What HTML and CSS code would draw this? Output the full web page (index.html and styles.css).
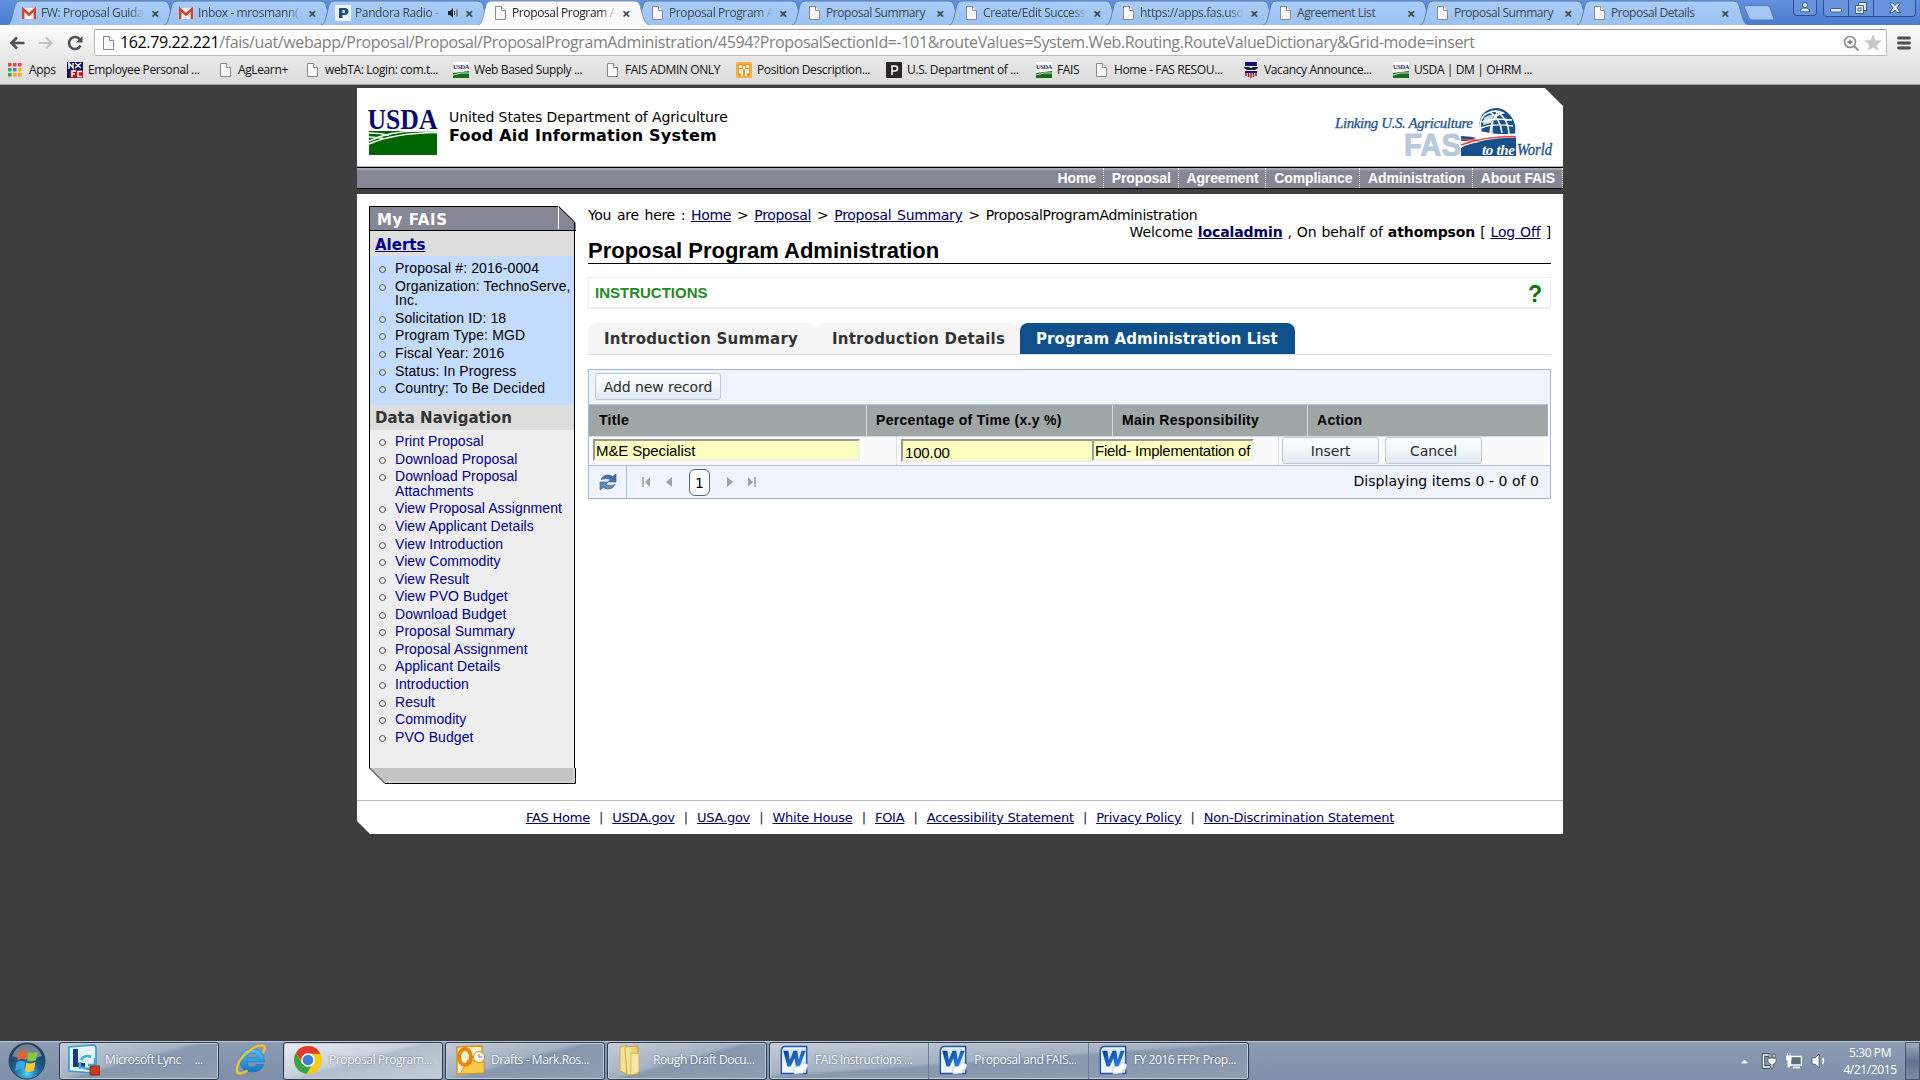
FILE: index.html
```html
<!DOCTYPE html>
<html lang="en">
<head>
  <meta charset="UTF-8" />
  <title>Proposal Program Administration</title>
  <link rel="stylesheet" href="styles.css">
</head>
<body>
  <!-- shared icons -->
  <svg class="defs" width="0" height="0">
    <defs>
      <linearGradient id="gBlue" x1="0" y1="0" x2="0" y2="1"><stop offset="0" stop-color="#4fc3f7"/><stop offset="1" stop-color="#1473c8"/></linearGradient>
      <linearGradient id="gTab" x1="0" y1="0" x2="0" y2="1"><stop offset="0" stop-color="#a9cdf9"/><stop offset="1" stop-color="#9cc2f3"/></linearGradient>
      <radialGradient id="gOrb" cx=".5" cy=".85" r=".8"><stop offset="0" stop-color="#4fd3f5"/><stop offset=".45" stop-color="#1b5f95"/><stop offset="1" stop-color="#24384f"/></radialGradient>
      <linearGradient id="gFolder" x1="0" y1="0" x2="1" y2="0"><stop offset="0" stop-color="#fbeeb0"/><stop offset="1" stop-color="#e2c056"/></linearGradient>
      <linearGradient id="gWord" x1="0" y1="0" x2="1" y2="1"><stop offset="0" stop-color="#0c3c9c"/><stop offset="1" stop-color="#2f8be6"/></linearGradient>
    </defs>
    <symbol id="tab" viewBox="0 0 172 25"><path d="M0 25C4 24 4 21 8 5Q9 1 13 1H157Q161 1 162 5C166 21 167 24 172 25"/></symbol>
    <symbol id="page" viewBox="0 0 16 16"><path d="M3.500 1.500h6l4 4v9h-10z" fill="#f8f8f8" stroke="#8a8a8a"/><path d="M9.500 1.500v4h4" fill="#fff" stroke="#8a8a8a"/></symbol>
    <symbol id="gmail" viewBox="0 0 16 16"><rect x="1" y="3" width="14" height="11" rx="1" fill="#f4f0ef"/><path d="M2.200 14V4.200L8 9.500l5.800-5.300V14" fill="none" stroke="#d8402f" stroke-width="2.400"/></symbol>
    <symbol id="usda" viewBox="0 0 16 16"><rect width="16" height="16" fill="#fff"/><text x="0" y="7" font-family="Liberation Serif" font-weight="bold" font-size="7" textLength="16" lengthAdjust="spacingAndGlyphs" fill="#1c1c5c">USDA</text><path d="M0 11Q8 10 16 9v7H0z" fill="#176b1c"/><path d="M0 13Q8 10 16 11" stroke="#cfe6cf" fill="none"/></symbol>
    <symbol id="word" viewBox="0 0 30 32"><path d="M5 1.500h23.500v29H1.500V6Q2 2 5 1.500z" fill="#eef5fd" stroke="#2554a8" stroke-width="1.600"/><path d="M4 4h22v12H4z" fill="#d3e6fb"/><path d="M3.500 6h5.500l1.500 10 4-10h4l1.500 10 3-10h4.500l-6.500 17h-4l-1.500-9-4 9H8z" fill="url(#gWord)"/><path d="M15 24l7-2 2-4 6 3-2 6-2-1-1 4-10 1z" fill="#fff" stroke="#9db9de" stroke-width=".7"/></symbol>
  </svg>

  <header class="chrome">
    <div class="tabstrip">
      <div class="tab"><svg class="shape"><use href="#tab"/></svg><svg class="ico"><use href="#gmail"/></svg><span>FW: Proposal Guida</span><i>×</i></div>
      <div class="tab"><svg class="shape"><use href="#tab"/></svg><svg class="ico"><use href="#gmail"/></svg><span>Inbox - mrosmann(</span><i>×</i></div>
      <div class="tab audio"><svg class="shape"><use href="#tab"/></svg><svg class="ico" viewBox="0 0 16 16"><rect width="16" height="16" rx="1" fill="#eef3f7"/><path d="M4 3h5.500q4 0 4 3.500t-4.500 3.500H7.500v3H4zM7.500 5v3h1q1.500 0 1.500-1.500T8.500 5z" fill="#1d4e7c"/></svg><span>Pandora Radio -</span><svg class="speaker" viewBox="0 0 10 10"><path d="M0 3h2l3-3v10L2 7H0z" fill="#222"/><path d="M6.500 3v4M9 1.500v7" stroke="#444"/></svg><i>×</i></div>
      <div class="tab active"><svg class="shape"><use href="#tab"/></svg><svg class="ico"><use href="#page"/></svg><span>Proposal Program A</span><i>×</i></div>
      <div class="tab"><svg class="shape"><use href="#tab"/></svg><svg class="ico"><use href="#page"/></svg><span>Proposal Program A</span><i>×</i></div>
      <div class="tab"><svg class="shape"><use href="#tab"/></svg><svg class="ico"><use href="#page"/></svg><span class="full">Proposal Summary</span><i>×</i></div>
      <div class="tab"><svg class="shape"><use href="#tab"/></svg><svg class="ico"><use href="#page"/></svg><span>Create/Edit Success</span><i>×</i></div>
      <div class="tab"><svg class="shape"><use href="#tab"/></svg><svg class="ico"><use href="#page"/></svg><span>https://apps.fas.usd</span><i>×</i></div>
      <div class="tab"><svg class="shape"><use href="#tab"/></svg><svg class="ico"><use href="#page"/></svg><span class="full">Agreement List</span><i>×</i></div>
      <div class="tab"><svg class="shape"><use href="#tab"/></svg><svg class="ico"><use href="#page"/></svg><span class="full">Proposal Summary</span><i>×</i></div>
      <div class="tab"><svg class="shape"><use href="#tab"/></svg><svg class="ico"><use href="#page"/></svg><span class="full">Proposal Details</span><i>×</i></div>
      <svg class="newtab" viewBox="0 0 32 16"><path d="M3 .5h21q2 0 3 2l3.500 10q1 2.500-1 2.500H9q-2 0-3-2L1.500 3Q.5.500 3 .5z" fill="#a3c6f3" stroke="#5377b5"/></svg>
      <div class="winctl">
        <svg class="user" viewBox="0 0 22 16"><circle cx="11" cy="5.500" r="2.700"/><path d="M6 12.500q0-4 5-4t5 4z"/></svg>
        <div class="winbtns">
          <svg class="min" viewBox="0 0 24 16"><rect x="6.500" y="8.500" width="11" height="3.500" rx="1"/></svg>
          <svg class="max" viewBox="0 0 24 16"><path d="M9.500 2.500h8v8h-8z"/><path d="M6.500 5.500h8v8h-8zM9 8h3v3H9z"/></svg>
          <svg class="cls" viewBox="0 0 40 16"><path d="M15 3h3.500l2 2.500 2-2.500H26l-3.500 4.800L26 12.500h-3.500l-2-2.500-2 2.500H15l3.500-4.700z"/></svg>
        </div>
      </div>
    </div>
    <div class="toolbar">
      <svg class="nav-ico back" viewBox="0 0 16 16"><path d="M15.500 8H3M8 2.500L2.500 8 8 13.500" fill="none" stroke="#505050" stroke-width="2.600"/></svg>
      <svg class="nav-ico fwd" viewBox="0 0 16 16"><path d="M.5 8h12M8 2.500l5.500 5.500L8 13.500" fill="none" stroke="#c4c4c4" stroke-width="2.200"/></svg>
      <svg class="nav-ico reload" viewBox="0 0 16 16"><path d="M13.500 10.500a6 6 0 1 1-.6-6" fill="none" stroke="#505050" stroke-width="2.600"/><path d="M15.500 1v6.500H9z" fill="#505050"/></svg>
      <div class="omnibox">
        <svg class="ico"><use href="#page"/></svg>
        <span class="url"><b>162.79.22.221</b>/fais/uat/webapp/Proposal/Proposal/ProposalProgramAdministration/4594?ProposalSectionId=-101&amp;routeValues=System.Web.Routing.RouteValueDictionary&amp;Grid-mode=insert</span>
        <svg class="ico" viewBox="0 0 16 16"><circle cx="7" cy="7" r="5.500" fill="none" stroke="#8a8a8a" stroke-width="1.600"/><path d="M11 11l4.500 4.500M7 4.500v5M4.500 7h5" stroke="#8a8a8a" stroke-width="1.800"/></svg>
        <svg class="star" viewBox="0 0 18 18"><path d="M9 0l2.400 6.200L18 6.600l-5.200 4.200L14.600 17 9 13.500 3.400 17l1.800-6.200L0 6.600l6.600-.4z" fill="#c9c9c9"/></svg>
      </div>
      <svg class="menu" viewBox="0 0 14 14"><path d="M1.500 2h11M1.500 7h11M1.500 12h11" stroke="#4e4e4e" stroke-width="2.800" stroke-linecap="round"/></svg>
    </div>
    <div class="bookmarks">
      <a><svg class="ico" viewBox="0 0 16 16"><path d="M0 1h3.500v3.500H0zM5 1h3.500v3.500H5zM10 1h3.500v3.500H10z" fill="#e8453c"/><path d="M0 6h3.500v3.500H0z" fill="#3aa757"/><path d="M5 6h3.500v3.500H5z" fill="#3b7ded"/><path d="M10 6h3.500v3.500H10zM5 11h3.500v3.500H5zM10 11h3.500v3.500H10z" fill="#f4b400"/><path d="M0 11h3.500v3.500H0z" fill="#3aa757"/></svg>Apps</a>
      <a><svg class="ico" viewBox="0 0 16 16"><path d="M0 0h16v8H0z" fill="#10105c"/><path d="M3 8h13v8H0z" fill="#b01020"/><path d="M0 7h3v9H0z" fill="#10105c"/><path d="M2 7V1l4 5V1M8 1l6 5M14 1L8 6M5 15V9h4M5 12h3M15 9.500h-4v5h4" fill="none" stroke="#fff" stroke-width="1.400"/></svg>Employee Personal ...</a>
      <a><svg class="ico"><use href="#page"/></svg>AgLearn+</a>
      <a><svg class="ico"><use href="#page"/></svg>webTA: Login: com.t...</a>
      <a><svg class="ico"><use href="#usda"/></svg>Web Based Supply ...</a>
      <a><svg class="ico"><use href="#page"/></svg>FAIS ADMIN ONLY</a>
      <a><svg class="ico" viewBox="0 0 16 16"><rect width="16" height="16" rx="1.500" fill="#f39b1d"/><rect x="1" y="1" width="14" height="14" fill="none" stroke="#ffd38a" stroke-width=".8"/><circle cx="4.500" cy="4.500" r="1.600" fill="#fff"/><circle cx="11.500" cy="4.500" r="1.600" fill="#fff"/><path d="M3 7h4v7H5v-3H3zM9 7h4v4h-2v3H9zM7 4h2v3H7z" fill="#fff"/></svg>Position Description...</a>
      <a><svg class="ico" viewBox="0 0 16 16"><rect width="16" height="16" rx="1" fill="#2a2627"/><path d="M6 13V4h3q2.500 0 2.500 2.400T9 9H6" fill="none" stroke="#fff" stroke-width="1.500"/></svg>U.S. Department of ...</a>
      <a><svg class="ico"><use href="#usda"/></svg>FAIS</a>
      <a><svg class="ico"><use href="#page"/></svg>Home - FAS RESOU...</a>
      <a><svg class="ico" viewBox="0 0 16 16"><path d="M2 0h12v4H2zM2 9h12v2H2z" fill="#12127a"/><path d="M2 4h12v5H2z" fill="#eee"/><path d="M1 5h5l2 1 2-1h5v1l-3 2H4L1 6z" fill="#222"/><path d="M3 11v3M5.500 11v4M8 11v5M10.500 11v4M13 11v3" stroke="#a81224" stroke-width="1.400"/></svg>Vacancy Announce...</a>
      <a><svg class="ico"><use href="#usda"/></svg>USDA | DM | OHRM ...</a>
    </div>
  </header>

  <div class="site">
    <div class="banner">
      <svg class="usda-logo" viewBox="0 0 70 48">
        <text x="-.5" y="20.500" font-family="Liberation Serif" font-size="29" font-weight="bold" textLength="70" lengthAdjust="spacingAndGlyphs" fill="#0a0a6e">USDA</text>
        <path d="M1 23h68v24H1z" fill="#006400"/>
        <path d="M1 25q12 0 20 2.500M1 29q8 0 14 1.500M1 36Q26 25 69 24.500" fill="none" stroke="#fff" stroke-width="1.400"/><path d="M1 33Q22 23 50 23H69" fill="none" stroke="#fff" stroke-width="1.500"/>
      </svg>
      <div class="names"><span>United States Department of Agriculture</span><strong>Food Aid Information System</strong></div>
      <svg class="fas-logo" viewBox="0 0 218 48">
        <text x="0" y="20" font-family="Liberation Serif" font-style="italic" font-size="15" textLength="138" fill="#17508c" stroke="#17508c" stroke-width=".25">Linking U.S. Agriculture</text>
        <text x="69" y="47.500" font-family="Liberation Sans" font-weight="bold" font-size="31" textLength="57" lengthAdjust="spacingAndGlyphs" fill="#b9c9dc" stroke="#b9c9dc">FAS</text>
        <path d="M146 24Q141 8 153 2q11-5 20 3 9 8 7 21l-8 1z" fill="#17508c"/>
        <path d="M146 24Q143 9 153 5q8-4 15 0-12 2-13 21zM157 25q-1-13 5-20M147 14q11-4 30-2M146 20q12-5 32-2M160 3q13 6 14 23M155 4q10 6 12 21" fill="none" stroke="#fff" stroke-width="1.500"/><path d="M149 10q6-4 10-3l-3 8-8 2z" fill="#fff" opacity=".8"/>
        <path d="M126 28q10 0 20 3 15-3 35-3.500V48h-55z" fill="#17508c"/><path d="M126 33q12 0 19 1Q126 37 126 41z" fill="#fff"/><path d="M126 37Q148 28 181 27.500" fill="none" stroke="#fff" stroke-width="4"/>
        <path d="M126 31.500q10 0 18 1M126 37Q148 28.500 181 28.500" fill="none" stroke="#e9433f" stroke-width="1.500"/>
        <text x="147" y="47" font-family="Liberation Serif" font-style="italic" font-size="15" font-weight="bold" textLength="33" fill="#fff">to the</text>
        <text x="182" y="47" font-family="Liberation Serif" font-style="italic" font-size="16" textLength="35" lengthAdjust="spacingAndGlyphs" fill="#17508c" stroke="#17508c" stroke-width=".3">World</text>
      </svg>
    </div>
    <nav class="topnav"><a>Home</a><a>Proposal</a><a>Agreement</a><a>Compliance</a><a>Administration</a><a>About FAIS</a></nav>

    <div class="body">
      <aside class="sidebar">
        <div class="side-title">My FAIS<svg viewBox="0 0 18 24"><path d="M1 0H18V17z" fill="#fff"/><path d="M1 1L16.500 16v8" fill="none" stroke="#000"/><path d="M.5 0v23" stroke="#fff"/></svg></div>
        <div class="side-inner">
          <h3 class="alerts"><a>Alerts</a></h3>
          <ul class="info">
            <li>Proposal #: 2016-0004</li>
            <li>Organization: TechnoServe, Inc.</li>
            <li>Solicitation ID: 18</li>
            <li>Program Type: MGD</li>
            <li>Fiscal Year: 2016</li>
            <li>Status: In Progress</li>
            <li>Country: To Be Decided</li>
          </ul>
          <h3>Data Navigation</h3>
          <ul class="links">
            <li>Print Proposal</li>
            <li>Download Proposal</li>
            <li>Download Proposal<br>Attachments</li>
            <li>View Proposal Assignment</li>
            <li>View Applicant Details</li>
            <li>View Introduction</li>
            <li>View Commodity</li>
            <li>View Result</li>
            <li>View PVO Budget</li>
            <li>Download Budget</li>
            <li>Proposal Summary</li>
            <li>Proposal Assignment</li>
            <li>Applicant Details</li>
            <li>Introduction</li>
            <li>Result</li>
            <li>Commodity</li>
            <li>PVO Budget</li>
          </ul>
        </div>
        <svg class="side-foot" viewBox="0 0 207 16"><path d="M.5 0L16 15.500h190.500V0" fill="#c4c4c4" stroke="#000"/><path d="M17 14h188V0" fill="none" stroke="#e4e4e4"/></svg>
      </aside>

      <main>
        <div class="crumbs">You are here : <a>Home</a> &gt; <a>Proposal</a> &gt; <a>Proposal Summary</a> &gt; ProposalProgramAdministration</div>
        <div class="welcome">Welcome <a><b>localadmin</b></a> , On behalf of <b>athompson</b> [ <a>Log Off</a> ]</div>
        <h1>Proposal Program Administration</h1>
        <div class="instructions"><span>INSTRUCTIONS</span><b>?</b></div>
        <div class="steps"><a class="s1">Introduction Summary</a><a class="s2">Introduction Details</a><a class="s3">Program Administration List</a></div>

        <div class="grid">
          <div class="grid-bar"><button class="add">Add new record</button></div>
          <div class="grid-head"><span>Title</span><span>Percentage of Time (x.y %)</span><span>Main Responsibility</span><span class="act">Action</span></div>
          <div class="grid-row">
            <div class="c1"><div class="field">M&amp;E Specialist</div></div>
            <div class="c2"><div class="field">100.00</div></div>
            <div class="c3"><div class="field">Field- Implementation of</div></div>
            <div class="c4"><button>Insert</button><button>Cancel</button></div>
          </div>
          <div class="pager">
            <span class="refresh"><svg viewBox="0 0 18 18"><path d="M2 6.500Q4 2 9 2q3 0 4.500 1.500L17 1v8H9l2.500-2.500Q7 4.500 2 6.500z" fill="#3f72a8" stroke="#355b84" stroke-width=".6"/><path d="M16 11.500Q14 16 9 16q-3 0-4.500-1.500L1 17V9h8l-2.500 2.500q4.500 2 9.500 0z" fill="#5d8bbd" stroke="#355b84" stroke-width=".6"/></svg></span>
            <svg class="first" viewBox="0 0 8 10"><path d="M1 0v10" stroke="#a0a0a0" stroke-width="1.600"/><path d="M8 0v10L3 5z" fill="#a0a0a0"/></svg>
            <svg class="prev" viewBox="0 0 6 10"><path d="M6 0v10L0 5z" fill="#a0a0a0"/></svg>
            <span class="num">1</span>
            <svg class="next" viewBox="0 0 6 10"><path d="M0 0v10l6-5z" fill="#a0a0a0"/></svg>
            <svg class="last" viewBox="0 0 8 10"><path d="M7 0v10" stroke="#a0a0a0" stroke-width="1.600"/><path d="M0 0v10l5-5z" fill="#a0a0a0"/></svg>
            <span class="count">Displaying items 0 - 0 of 0</span>
          </div>
        </div>
      </main>
    </div>

    <footer><a>FAS Home</a><i>|</i><a>USDA.gov</a><i>|</i><a>USA.gov</a><i>|</i><a>White House</a><i>|</i><a>FOIA</a><i>|</i><a>Accessibility Statement</a><i>|</i><a>Privacy Policy</a><i>|</i><a>Non-Discrimination Statement</a></footer>
  </div>

  <div class="taskbar">
    <svg class="orb" viewBox="0 0 38 38"><circle cx="19" cy="19" r="18" fill="url(#gOrb)" stroke="#28435f"/><path d="M4 14Q9 2 19 2t15 12Q19 20 4 14z" fill="#fff" opacity=".35"/><path d="M11 10q4-2.500 8-.5l-1.500 8.500q-4-2-8.500.5z" fill="#f0612a"/><path d="M20.500 10q4 2 9-.5L28 18q-5 2.500-9 .5z" fill="#8cc63f"/><path d="M8.500 20.500q4-2.500 8.500-.5l-1.500 8.500q-4-2-8.500.5z" fill="#3ba7e8"/><path d="M18.500 20.500q4 2 9-.5L26 28.500q-5 2.500-9 .5z" fill="#fdc72f"/></svg>
    <div class="task lync"><svg viewBox="0 0 32 32"><path d="M1 3l24-2q3 0 3 3v22q0 3-3 3L1 27z" fill="#e3f2fb" stroke="#2d9fd0" stroke-width="1.600"/><path d="M5 5h5v14h7v4H5z" fill="#123f78"/><path d="M13 16q4-6 10-3M27 14v7h-7M26 20q-4 8-12 3M12 25v-7" fill="none" stroke="#45a9d4" stroke-width="2.600"/><rect x="22" y="22" width="10" height="9" rx="1" fill="#c93c22" stroke="#8e2412"/></svg><span>Microsoft Lync &nbsp; &nbsp; ...</span></div>
    <svg class="ie" viewBox="0 0 32 32"><path d="M29 20.500q-3 7.500-12 7.500Q5 28 5 16.500T17 5q12.500 0 12.500 13H12q.5 5 5 5 3 0 4-2.500zM12 13.500h10.500q-.5-4-5.200-4T12 13.500z" fill="url(#gBlue)" stroke="#1b6fb5" stroke-width=".5"/><path d="M28 9q4-7-1-7.500-4-.5-11 4Q6 12 3 20.500q-3 8.500 1.500 9 3 0 8-3" fill="none" stroke="#f6c22c" stroke-width="2.300"/></svg>
    <div class="task on"><svg viewBox="0 0 32 32"><circle cx="16" cy="16" r="14" fill="#fbc916"/><path d="M3.900 9A14 14 0 0 0 14.500 29.900L21 19 16 16 10 19z" fill="#38a34a"/><path d="M4 8.900A14 14 0 0 1 28.500 9.800H16L10 18z" fill="#e23a2e"/><circle cx="16" cy="16" r="6.800" fill="#fff"/><circle cx="16" cy="16" r="5.300" fill="#3a7fd5"/></svg><span>Proposal Program...</span></div>
    <div class="task"><svg viewBox="0 0 32 32"><path d="M3 3l25-1v26l-25 2z" fill="#fff3c9" stroke="#d59414" stroke-width="1.500"/><path d="M14 16l16 2v11l-24 1z" fill="#fbc94a" stroke="#d59414"/><ellipse cx="11" cy="13" rx="6" ry="8" fill="none" stroke="#e8870f" stroke-width="4"/><circle cx="25" cy="13" r="5.500" fill="#fff" stroke="#c98a1e"/><path d="M25 10v3h3" stroke="#777" fill="none"/></svg><span>Drafts - Mark.Ros...</span></div>
    <div class="task"><svg viewBox="0 0 32 32"><path d="M4 3l7-2v29l-7-3z" fill="#f5e195" stroke="#c9a945"/><path d="M9 3l13-1v28l-11 1z" fill="url(#gFolder)" stroke="#c9a945"/><path d="M15 9l8 1v18l-8 3z" fill="#f7e9a9" stroke="#c9a945" stroke-width=".6"/></svg><span>Rough Draft Docu...</span></div>
    <div class="group">
      <div><svg><use href="#word"/></svg><span>FAIS Instructions ...</span></div>
      <div><svg><use href="#word"/></svg><span>Proposal and FAIS...</span></div>
      <div><svg><use href="#word"/></svg><span>FY 2016 FFPr Prop...</span></div>
    </div>
    <div class="tray">
      <svg class="up" viewBox="0 0 10 5"><path d="M0 5L5 0l5 5z" fill="#fff" stroke="#46566b" stroke-width=".5"/></svg>
      <svg viewBox="0 0 16 16"><path d="M8 2H2.500v12H9" fill="none" stroke="#33404f" stroke-width="3.500"/><path d="M8 2H2.500v12H9" fill="none" stroke="#fff" stroke-width="1.600"/><path d="M7 5h8v4l-2 2h-1v4h-2v-4H9L7 9zM8 1h2v4H8zM12 1h2v4h-2z" fill="#fff" stroke="#33404f" stroke-width=".7"/></svg>
      <svg viewBox="0 0 16 16"><rect x="4.500" y="3.500" width="11" height="8.500" fill="#5b6c80" stroke="#fff" stroke-width="1.500"/><path d="M7 14.500h7" stroke="#fff" stroke-width="1.600"/><path d="M.5 3H5v4H3.500v7H2V7H.5zM1.500 0v3M4 0v3" fill="#fff" stroke="#fff" stroke-width=".8"/></svg>
      <svg viewBox="0 0 16 16"><path d="M1 5h3l4-4v14l-4-4H1z" fill="#fff" stroke="#33404f" stroke-width=".7"/><path d="M11.500 5q2 3 0 6" stroke="#fff" fill="none" stroke-width="1.400"/></svg>
      <div class="clock">5:30 PM<br>4/21/2015</div>
      <div class="desk"></div>
    </div>
  </div>
</body>
</html>
```
FILE: styles.css
```css
* { box-sizing: border-box; }
body {
  margin: 0;
  width: 1920px;
  height: 1080px;
  overflow: hidden;
  display: flex;
  flex-direction: column;
  background: #3e3e3e;
  font-family: "DejaVu Sans", sans-serif;
  color: #000;
}
.defs { position: absolute; }
svg { display: block; flex: none; }
.ico { width: 16px; height: 16px; }

/* browser window */
.chrome {
  height: 85px;
  border-bottom: 1px solid #9b9d9d;
  font-family: "Open Sans", sans-serif;
  font-size: 12px;
  letter-spacing: -0.38px;
}
.tabstrip {
  height: 25px;
  padding-left: 7px;
  display: flex;
  background: linear-gradient(#6191df, #4b7bd0);
}
.tab {
  position: relative;
  width: 157px;
  height: 25px;
  padding-left: 14px;
  display: flex;
  align-items: center;
  color: #3c4654;
  z-index: 1;
}
.tab .shape {
  position: absolute;
  left: 0;
  top: 0;
  width: 172px;
  height: 25px;
  z-index: -1;
  fill: url(#gTab);
  stroke: #5b7db4;
}
.tab.active { z-index: 2; color: #222; }
.tab.active .shape { fill: #fafafa; stroke: #7d93b5; }
.tab span {
  width: 104px;
  margin-left: 4px;
  overflow: hidden;
  white-space: nowrap;
  line-height: 20px;
  -webkit-mask-image: linear-gradient(90deg, #000 85%, transparent);
}
.tab span.full { -webkit-mask-image: none; letter-spacing: -0.44px; }
.tab.audio span { width: 87px; }
.speaker { width: 10px; height: 10px; margin: 0 1px 0 6px; }
.tab i {
  margin-left: 6px;
  font: bold 15px "Open Sans", sans-serif;
  color: #444;
}
.newtab { width: 32px; height: 16px; margin: 5px 0 0 9px; }
.winctl { display: flex; margin-left: 18px; gap: 6px; height: 17px; }
.winctl svg {
  fill: #dfeafa;
  stroke: #2b4475;
  stroke-width: 0.8;
  height: 16px;
}
.user, .winbtns { border: 1px solid #2f4f92; border-top: 0; border-radius: 0 0 4px 4px; background: #6694dc; }
.user { width: 24px; }
.winbtns { display: flex; }
.min, .max { width: 25px; border-right: 1px solid #2f4f92; }
.cls { width: 41px; }

.toolbar {
  height: 32px;
  padding: 4px 9px 1px 9px;
  display: flex;
  align-items: center;
  background: linear-gradient(#fdfdfd, #e8e8e8);
}
.nav-ico { width: 16px; height: 16px; margin-right: 13px; }
.reload { margin-right: 11px; }
.omnibox {
  width: 1794px;
  height: 27px;
  padding: 0 4px 0 5px;
  display: flex;
  align-items: center;
  background: #fff;
  border: 1px solid #b9b9b9;
  border-top-color: #989898;
  border-radius: 2px;
}
.url {
  flex: 1;
  margin: -1px 0 0 4px;
  font-size: 16px;
  letter-spacing: -0.38px;
  color: #808080;
  white-space: nowrap;
}
.url b { font-weight: normal; color: #000; }
.star { width: 18px; height: 18px; margin-left: 5px; }
.menu { width: 14px; height: 14px; margin-left: 10px; }
.bookmarks {
  height: 27px;
  padding: 0 0 2px 8px;
  display: grid;
  grid-template-columns: 59px 150px 87px 149px 151px 132px 150px 150px 57px 150px 150px 150px;
  background: linear-gradient(#e8e8e8, #dcdcdc);
  color: #111;
}
.bookmarks a { display: flex; align-items: center; gap: 5px; white-space: nowrap; }

/* site */
.site {
  width: 1206px;
  margin: 3px 0 0 357px;
  flex: none;
}
.banner {
  height: 79px;
  padding: 20px 10px 0 11px;
  display: flex;
  background: #fff;
  border-bottom: 1px solid #b4b4b4;
  clip-path: polygon(0 0, 1188px 0, 1206px 18px, 1206px 79px, 0 79px);
}
.usda-logo { width: 70px; height: 48px; }
.names { margin-left: 11px; padding-top: 1px; flex: 1; }
.names span { display: block; font-size: 14px; line-height: 17px; letter-spacing: -0.12px; }
.names strong { display: block; font-size: 16px; line-height: 20px; letter-spacing: 0.2px; }
.fas-logo { width: 218px; height: 48px; }
.topnav {
  height: 22px;
  border-top: 1px solid #000;
  border-bottom: 1px solid #000;
  background: linear-gradient(#a9abb8 0 1px, #858795 3px);
  display: flex;
  justify-content: flex-end;
  font: bold 14px/21px "Liberation Sans", sans-serif;
  letter-spacing: -0.13px;
  color: #fff;
}
.topnav a { padding: 0 7px 0 7.8px; border-right: 1px dotted #fff; }

.body {
  margin-top: 5px;
  height: 606px;
  padding: 12px 12px 0 12px;
  display: flex;
  background: #fff;
}
.sidebar { width: 207px; }
.side-title {
  height: 25px;
  padding-left: 7px;
  display: flex;
  justify-content: space-between;
  border: 1px solid #000;
  border-right: 0;
  background: #858795;
  color: #fff;
  font-size: 15px;
  font-weight: bold;
  letter-spacing: 0.6px;
  line-height: 27px;
}
.side-title svg { width: 18px; height: 24px; margin-top: -1px; }
.side-inner {
  width: 206px;
  height: 537px;
  border: solid #000;
  border-width: 0 1px;
  background: #eee;
}
.side-inner h3 {
  margin: 0;
  height: 25px;
  padding-left: 5px;
  background: #ddd;
  color: #333;
  font-size: 15px;
  line-height: 27px;
}
.side-inner .alerts { line-height: 28px; }
.alerts a { color: #00008b; text-decoration: underline; }
.sidebar ul {
  margin: 0;
  padding: 5px 0 0 25px;
  list-style: none;
  font: 14px/14.7px "Liberation Sans", sans-serif;
  letter-spacing: 0.12px;
}
.sidebar .links { padding-top: 4px; letter-spacing: 0.06px; }
.sidebar li { position: relative; margin-bottom: 2.86px; }
.sidebar li::before {
  content: "";
  position: absolute;
  left: -16px;
  top: 5px;
  width: 5px;
  height: 5px;
  border: 1.5px solid #555;
  border-radius: 50%;
}
.info { height: 149px; background: #c4dcff; }
.links { color: #00008b; }
.side-foot { width: 207px; height: 16px; }

main { width: 963px; margin-left: 12px; }
main a, footer a { color: #00005e; text-decoration: underline; }
.crumbs { font-size: 14px; line-height: 18px; letter-spacing: -0.32px; word-spacing: 1.75px; }
.welcome { font-size: 14px; line-height: 17px; text-align: right; letter-spacing: -0.1px; word-spacing: 0.6px; }
h1 {
  margin: 0;
  height: 23px;
  border-bottom: 1px solid #000;
  font: bold 22px/20px "Liberation Sans", sans-serif;
}
.instructions {
  height: 32px;
  margin-top: 13px;
  padding: 0 8px 0 6px;
  display: flex;
  justify-content: space-between;
  border: 1px solid #eee;
  border-bottom-width: 2px;
  font: bold 15px/30px "Liberation Sans", sans-serif;
  color: #228b22;
}
.instructions b { font-size: 23px; line-height: 32px; color: #007700; }
.steps {
  height: 32px;
  margin-top: 14px;
  display: flex;
  border-bottom: 1px solid #ddd;
}
.steps a {
  height: 31px;
  padding-left: 16px;
  border-radius: 8px 8px 0 0;
  background: #f5f5f5;
  color: #333;
  font-size: 15px;
  font-weight: bold;
  line-height: 33px;
  letter-spacing: 0.2px;
  text-decoration: none;
}
.s1 { width: 228px; }
.s2 { width: 204px; }
.steps .s3 { width: 275px; background: #10508a; color: #fff; letter-spacing: 0.08px; }

.grid {
  margin-top: 14px;
  border: 1px solid #a3b6cc;
  background: #fff;
}
.grid-bar { height: 34px; padding: 3px 6px; background: #eff3fb; }
.grid button {
  width: 97px;
  height: 27px;
  padding: 0;
  border: 1px solid #bcc9dc;
  border-radius: 3px;
  background: linear-gradient(#fdfdfe, #f3f6fa 45%, #e2e9f3);
  font: 14px "DejaVu Sans", sans-serif;
  letter-spacing: -0.08px;
  color: #2b2b2b;
}
.grid .add { width: 126px; }
.grid-head {
  width: 959px;
  height: 33px;
  display: grid;
  grid-template-columns: 278px 246px 195px 240px;
  border-top: 1px solid #a9c3d6;
  border-bottom: 1px solid #cfdae2;
  background: #9fa6a6;
  font: bold 14px/30px "Liberation Sans", sans-serif;
  letter-spacing: 0.3px;
}
.grid-head span { padding-left: 9px; border-right: 1px solid #d6dcdf; }
.grid-head span:first-child { padding-left: 10px; }
.grid-head .act { line-height: 31px; border: 0; }
.grid-row {
  height: 28px;
  display: flex;
  background: #fbfbfb;
  font: 15px/19px "Liberation Sans", sans-serif;
  letter-spacing: -0.2px;
}
.c1 { width: 308px; padding: 2px 4px; border-right: 1px solid #dbe3ea; }
.c2 { width: 191px; padding: 2px 0 0 4px; }
.c3 { width: 191px; padding: 2px 0 0 4px; border-right: 1px solid #dbe3ea; }
.c4 { padding-left: 3px; display: flex; gap: 6px; }
.field {
  height: 22px;
  padding-left: 1px;
  overflow: hidden;
  white-space: nowrap;
  background: #faffbd;
  border: 2px solid;
  border-color: #999 #eee #eee #999;
}
.c1 .field { width: 267px; letter-spacing: -0.12px; }
.c2 .field { width: 193px; height: 23px; padding: 2px 0 0 2px; }
.c3 .field { position: relative; width: 162px; letter-spacing: -0.24px; }
.pager {
  height: 33px;
  display: flex;
  align-items: center;
  border-top: 1px solid #a9bfd2;
  background: #eff3fb;
  font-size: 14px;
}
.refresh { width: 38px; height: 32px; padding: 7px 0 0 10px; border-right: 1px solid #a9bfd2; }
.refresh svg { width: 18px; height: 18px; }
.first, .last { width: 8px; height: 10px; }
.prev, .next { width: 6px; height: 10px; }
.first { margin-left: 15px; }
.prev { margin-left: 16px; }
.num {
  width: 21px;
  height: 27px;
  margin: 0 17px;
  border: 1px solid #4b6a88;
  border-radius: 6px;
  background: #fff;
  line-height: 27px;
  text-align: center;
}
.last { margin-left: 15px; }
.count { margin: -2px 11px 0 auto; letter-spacing: 0.05px; }

footer {
  height: 34px;
  display: flex;
  justify-content: center;
  background: #fff;
  border-top: 1px solid #bbb;
  font-size: 13px;
  line-height: 33px;
  letter-spacing: -0.24px;
  clip-path: polygon(0 0, 100% 0, 100% 100%, 13px 100%, 0 21px);
}
footer i { width: 22.4px; text-align: center; font-style: normal; color: #224; }

/* windows taskbar */
.taskbar {
  height: 39px;
  margin-top: auto;
  flex: none;
  display: flex;
  background: linear-gradient(#8b9cb3, #7e90a9);
  border-top: 1px solid #b9c5d6;
  font-family: "Open Sans", sans-serif;
  font-size: 12px;
  letter-spacing: -0.4px;
  color: #fff;
}
.orb { width: 38px; height: 38px; margin: 0 13px 0 8px; }
.task, .group {
  height: 38px;
  border: 1px solid #2f3b4b;
  border-radius: 3px;
  box-shadow: inset 0 0 0 1px #c2ccd9;
  background: linear-gradient(165deg, #c3ccd8 0, #a4b1c3 45%, #8798af 50%, #8d9db3);
}
.task { width: 160px; margin-right: 2px; padding: 0 0 3px 8px; display: flex; align-items: center; }
.lync { margin-right: 16px; }
.task svg { width: 32px; height: 32px; margin-right: 5px; }
.task span, .group span { white-space: pre; text-shadow: 0 0 2px #4a5c73; }
.task.on { background: linear-gradient(165deg, #e9edf2 0, #c8d0dc 45%, #b3becd 50%, #c3ccd8); }
.ie { width: 32px; height: 34px; margin: 1px 16px 0 0; }
.group { display: flex; width: 480px; background: linear-gradient(176deg, #c3ccd8 0, #a4b1c3 45%, #8798af 50%, #8d9db3); }
.group div { width: 160px; padding: 0 0 3px 9px; display: flex; align-items: center; border-right: 1px solid #6f8098; }
.group div:last-child { border: 0; }
.group svg { width: 30px; height: 30px; margin-right: 6px; }
.tray { margin-left: auto; display: flex; align-items: center; gap: 9px; }
.tray svg { width: 16px; height: 16px; }
.tray .up { width: 9px; height: 5px; margin-right: 3px; }
.clock { width: 70px; text-align: center; line-height: 17px; margin: 0 -9px 0 -1px; }
.desk { width: 15px; height: 38px; border: 1px solid #47566b; background: linear-gradient(#9dabbd, #62748c 50%, #7b8da5); }
```
